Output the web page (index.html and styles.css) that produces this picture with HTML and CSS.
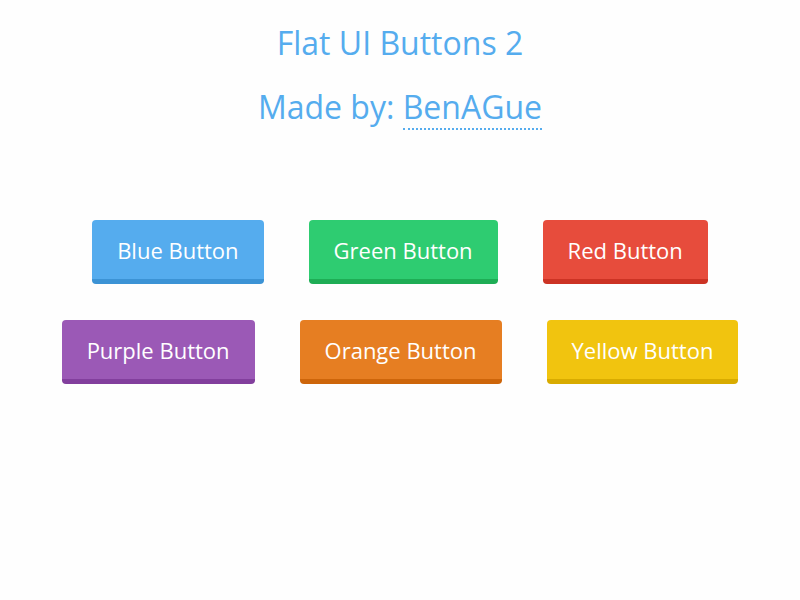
FILE: index.html
```html
<!DOCTYPE html>
<html>
<head>
<meta charset="utf-8">
<link rel="stylesheet" href="styles.css">
</head>
<body>
<header class="head">
  <h1 class="title">Flat UI Buttons 2</h1>
  <h2 class="author">Made by: <a class="link">BenAGue</a></h2>
</header>
<main class="buttons">
  <div class="row">
    <a class="btn blue">Blue Button</a>
    <a class="btn green">Green Button</a>
    <a class="btn red">Red Button</a>
  </div>
  <div class="row">
    <a class="btn purple">Purple Button</a>
    <a class="btn orange">Orange Button</a>
    <a class="btn yellow">Yellow Button</a>
  </div>
</main>
</body>
</html>
```
FILE: styles.css
```css
html, body {
  margin: 0;
  padding: 0;
  background: #fefefe;
  font-family: "Open Sans", sans-serif;
}
.head {
  text-align: center;
  color: #55acee;
  padding-top: 23px;
}
.title {
  margin: 0;
  font-size: 32px;
  font-weight: 400;
  line-height: 40px;
}
.author {
  margin: 22px 0 0;
  font-size: 32px;
  font-weight: 400;
  line-height: 44px;
}
.link {
  border-bottom: 2px dotted #55acee;
}
.buttons {
  margin-top: 91px;
  display: flex;
  flex-direction: column;
  gap: 36px;
  align-items: center;
  padding-bottom: 40px;
}
.row {
  display: flex;
  gap: 45px;
  justify-content: center;
}
.btn {
  display: block;
  height: 59px;
  line-height: 61px;
  padding: 0 25px;
  border-radius: 4px;
  border-bottom: 5px solid;
  color: #fff;
  font-size: 22px;
}
.blue { background: #55acee; border-bottom-color: #3c93d5; }
.green { background: #2ecc71; border-bottom-color: #1ead55; }
.red { background: #e74c3c; border-bottom-color: #cc3324; }
.purple { background: #9b59b6; border-bottom-color: #823f9d; }
.orange { background: #e67e22; border-bottom-color: #cd650a; }
.yellow { background: #f1c40f; border-bottom-color: #d8ab00; }
```
